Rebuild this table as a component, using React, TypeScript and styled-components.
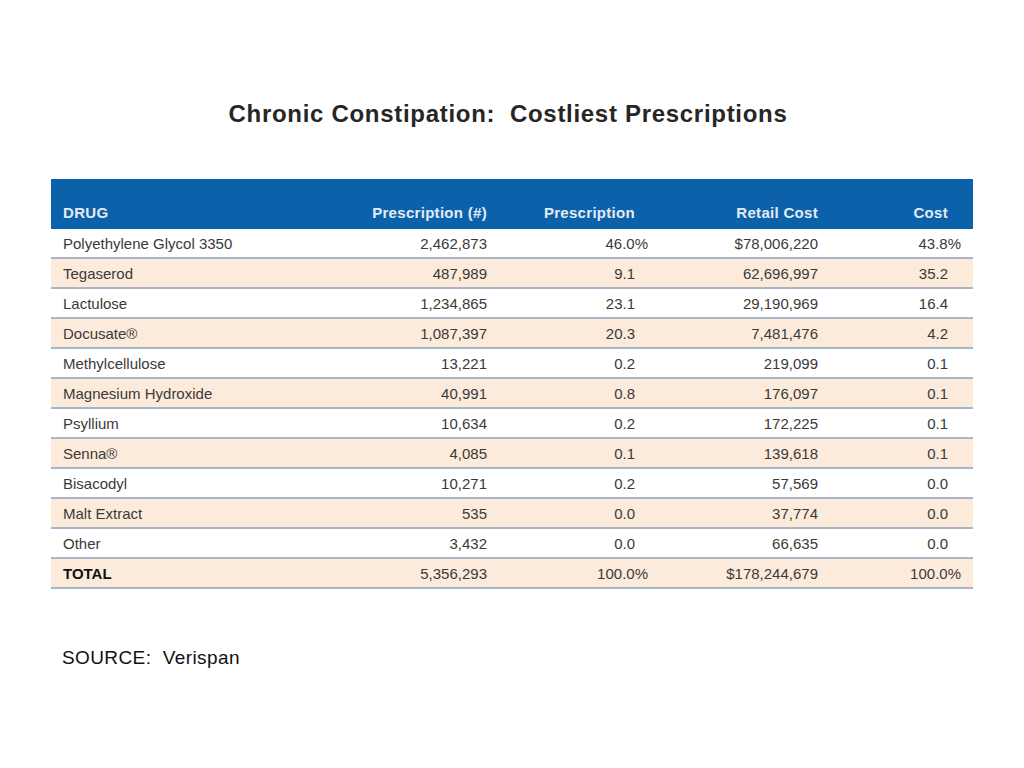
import React from "react";
import styled, { createGlobalStyle } from "styled-components";

const Global = createGlobalStyle`
  html, body { margin: 0; padding: 0; background: #ffffff; }
  body { font-family: "Liberation Sans", Arial, sans-serif; }
`;

const Page = styled.div`
  width: 1024px;
  height: 768px;
  box-sizing: border-box;
  padding-top: 99px;
  display: flex;
  flex-direction: column;
`;

const Title = styled.h1`
  margin: 0 8px 0 0;
  text-align: center;
  font-family: "Liberation Sans", Arial, sans-serif;
  font-weight: bold;
  font-size: 24px;
  letter-spacing: 0.7px;
  line-height: 30px;
  color: #262626;
  white-space: pre;
`;

const Table = styled.div`
  margin: 50px 0 0 51px;
  width: 922px;
  display: flex;
  flex-direction: column;
`;

const cols = "274px 150px 148px 183px 130px";

const HeadRow = styled.div`
  display: grid;
  grid-template-columns: ${cols};
  padding: 0 25px 7px 12px;
  height: 50px;
  align-items: end;
  background: #0b62ab;
  box-sizing: border-box;
`;

const HeadCell = styled.div<{ $align?: string }>`
  text-align: ${(p) => p.$align || "right"};
  font-family: "Liberation Sans", Arial, sans-serif;
  font-weight: bold;
  font-size: 15px;
  letter-spacing: 0.3px;
  line-height: 18px;
  color: #e4eaf4;
  white-space: nowrap;
`;

const Row = styled.div<{ $shade?: boolean }>`
  display: grid;
  grid-template-columns: ${cols};
  padding: 2px 25px 0 12px;
  height: 30px;
  box-sizing: border-box;
  align-items: center;
  background: ${(p) => (p.$shade ? "#fcebdb" : "#ffffff")};
  border-bottom: 2px solid #a7b5c6;
`;

const Cell = styled.div<{ $align?: string; $bold?: boolean }>`
  text-align: ${(p) => p.$align || "right"};
  font-family: "Liberation Sans", Arial, sans-serif;
  font-weight: ${(p) => (p.$bold ? "bold" : "normal")};
  font-size: 15px;
  line-height: 18px;
  color: ${(p) => (p.$bold ? "#111111" : "#3a3a3a")};
  white-space: nowrap;
`;

const Suffix = styled.span`
  margin-right: -13px;
`;

const Source = styled.div`
  margin: 58px 0 0 62px;
  font-family: "Liberation Sans", Arial, sans-serif;
  font-size: 19px;
  letter-spacing: 0.4px;
  line-height: 22px;
  color: #111111;
  white-space: pre;
`;

type R = [string, string, string, string, string];

const rows: R[] = [
  ["Polyethylene Glycol 3350", "2,462,873", "46.0%", "$78,006,220", "43.8%"],
  ["Tegaserod", "487,989", "9.1", "62,696,997", "35.2"],
  ["Lactulose", "1,234,865", "23.1", "29,190,969", "16.4"],
  ["Docusate®", "1,087,397", "20.3", "7,481,476", "4.2"],
  ["Methylcellulose", "13,221", "0.2", "219,099", "0.1"],
  ["Magnesium Hydroxide", "40,991", "0.8", "176,097", "0.1"],
  ["Psyllium", "10,634", "0.2", "172,225", "0.1"],
  ["Senna®", "4,085", "0.1", "139,618", "0.1"],
  ["Bisacodyl", "10,271", "0.2", "57,569", "0.0"],
  ["Malt Extract", "535", "0.0", "37,774", "0.0"],
  ["Other", "3,432", "0.0", "66,635", "0.0"],
];

const total: R = ["TOTAL", "5,356,293", "100.0%", "$178,244,679", "100.0%"];

function Value({ v }: { v: string }) {
  if (v.endsWith("%")) {
    return (
      <>
        {v.slice(0, -1)}
        <Suffix>%</Suffix>
      </>
    );
  }
  return <>{v}</>;
}

export default function App() {
  return (
    <>
      <Global />
      <Page>
        <Title>{"Chronic Constipation:  Costliest Prescriptions"}</Title>
        <Table>
          <HeadRow>
            <HeadCell $align="left">DRUG</HeadCell>
            <HeadCell>Prescription (#)</HeadCell>
            <HeadCell>Prescription</HeadCell>
            <HeadCell>Retail Cost</HeadCell>
            <HeadCell>Cost</HeadCell>
          </HeadRow>
          {rows.map((r, i) => (
            <Row key={r[0]} $shade={i % 2 === 1}>
              <Cell $align="left">{r[0]}</Cell>
              {r.slice(1).map((v, j) => (
                <Cell key={j}>
                  <Value v={v} />
                </Cell>
              ))}
            </Row>
          ))}
          <Row $shade>
            <Cell $align="left" $bold>
              {total[0]}
            </Cell>
            {total.slice(1).map((v, j) => (
              <Cell key={j}>
                <Value v={v} />
              </Cell>
            ))}
          </Row>
        </Table>
        <Source>{"SOURCE:  Verispan"}</Source>
      </Page>
    </>
  );
}
